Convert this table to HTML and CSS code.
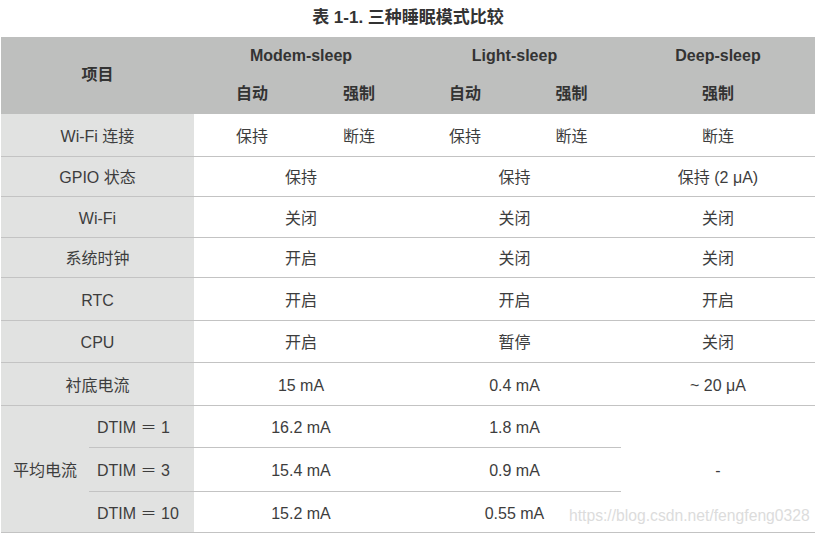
FILE: index.html
```html
<!DOCTYPE html>
<html lang="zh-CN">
<head>
<meta charset="utf-8">
<title>三种睡眠模式比较</title>
<link rel="stylesheet" href="styles.css">
</head>
<body>
<div class="page">
  <div class="title">表 1-1. 三种睡眠模式比较</div>
  <div class="table">
    <div class="hd item">项目</div>
    <div class="hd top span2">Modem-sleep</div>
    <div class="hd top span2">Light-sleep</div>
    <div class="hd top">Deep-sleep</div>
    <div class="hd sub">自动</div>
    <div class="hd sub">强制</div>
    <div class="hd sub">自动</div>
    <div class="hd sub">强制</div>
    <div class="hd sub">强制</div>

    <div class="lbl span2">Wi-Fi 连接</div>
    <div class="c">保持</div>
    <div class="c">断连</div>
    <div class="c">保持</div>
    <div class="c">断连</div>
    <div class="c">断连</div>

    <div class="lbl span2">GPIO 状态</div>
    <div class="c span2">保持</div>
    <div class="c span2">保持</div>
    <div class="c">保持 (2 μA)</div>

    <div class="lbl span2">Wi-Fi</div>
    <div class="c span2">关闭</div>
    <div class="c span2">关闭</div>
    <div class="c">关闭</div>

    <div class="lbl span2">系统时钟</div>
    <div class="c span2">开启</div>
    <div class="c span2">关闭</div>
    <div class="c">关闭</div>

    <div class="lbl span2">RTC</div>
    <div class="c span2">开启</div>
    <div class="c span2">开启</div>
    <div class="c">开启</div>

    <div class="lbl span2">CPU</div>
    <div class="c span2">开启</div>
    <div class="c span2">暂停</div>
    <div class="c">关闭</div>

    <div class="lbl span2">衬底电流</div>
    <div class="c span2">15 mA</div>
    <div class="c span2">0.4 mA</div>
    <div class="c">~ 20 μA</div>

    <div class="lbl rspan3">平均电流</div>
    <div class="lbl dtim">DTIM ＝ 1</div>
    <div class="c span2">16.2 mA</div>
    <div class="c span2">1.8 mA</div>
    <div class="c rspan3">-</div>

    <div class="lbl dtim">DTIM ＝ 3</div>
    <div class="c span2">15.4 mA</div>
    <div class="c span2">0.9 mA</div>

    <div class="lbl dtim">DTIM ＝ 10</div>
    <div class="c span2">15.2 mA</div>
    <div class="c span2">0.55 mA</div>
  </div>
  <div class="watermark">https://blog.csdn.net/fengfeng0328</div>
</div>
</body>
</html>
```

FILE: styles.css
```css
html, body {
  margin: 0;
  padding: 0;
  background: #ffffff;
}

body {
  font-family: "Liberation Sans", "Noto Sans CJK SC", sans-serif;
  font-size: 16px;
  color: #3d3d3d;
}

.page {
  position: relative;
  width: 820px;
  height: 537px;
  padding-left: 1px;
  box-sizing: border-box;
}

.title {
  width: 814px;
  height: 37px;
  display: flex;
  align-items: center;
  justify-content: center;
  font-weight: bold;
  font-size: 17px;
  line-height: 20px;
  color: #333333;
  padding-bottom: 2px;
  box-sizing: border-box;
}

.table {
  width: 814px;
  display: grid;
  grid-template-columns: 88px 105px 116px 98px 114px 99px 194px;
  grid-template-rows: 38px 39px 43px 40px 41px 40px 43px 42px 43px 42px 44px 41px;
}

.table > div {
  display: flex;
  align-items: center;
  justify-content: center;
  box-sizing: border-box;
  white-space: nowrap;
  line-height: 20px;
}

.hd {
  background: #bebfbe;
  font-weight: bold;
  color: #333333;
}

.hd.item {
  grid-column: 1 / 3;
  grid-row: 1 / 3;
  padding-bottom: 2px;
}

.hd.top {
  padding-top: 0;
}

.hd.sub {
  padding-bottom: 1px;
}

.span2 {
  grid-column: span 2;
}

.rspan3 {
  grid-row: span 3;
}

.lbl {
  background: #e1e2e1;
  border-bottom: 1px solid #c3c3c3;
  padding-top: 3px;
}

.c {
  border-bottom: 1px solid #c3c3c3;
  padding-top: 3px;
}

.lbl.dtim {
  justify-content: flex-start;
  padding-left: 8px;
}

.watermark {
  position: absolute;
  left: 569px;
  top: 507px;
  font-size: 15.7px;
  color: #dcdcdc;
  font-family: "Liberation Sans", sans-serif;
}
```
